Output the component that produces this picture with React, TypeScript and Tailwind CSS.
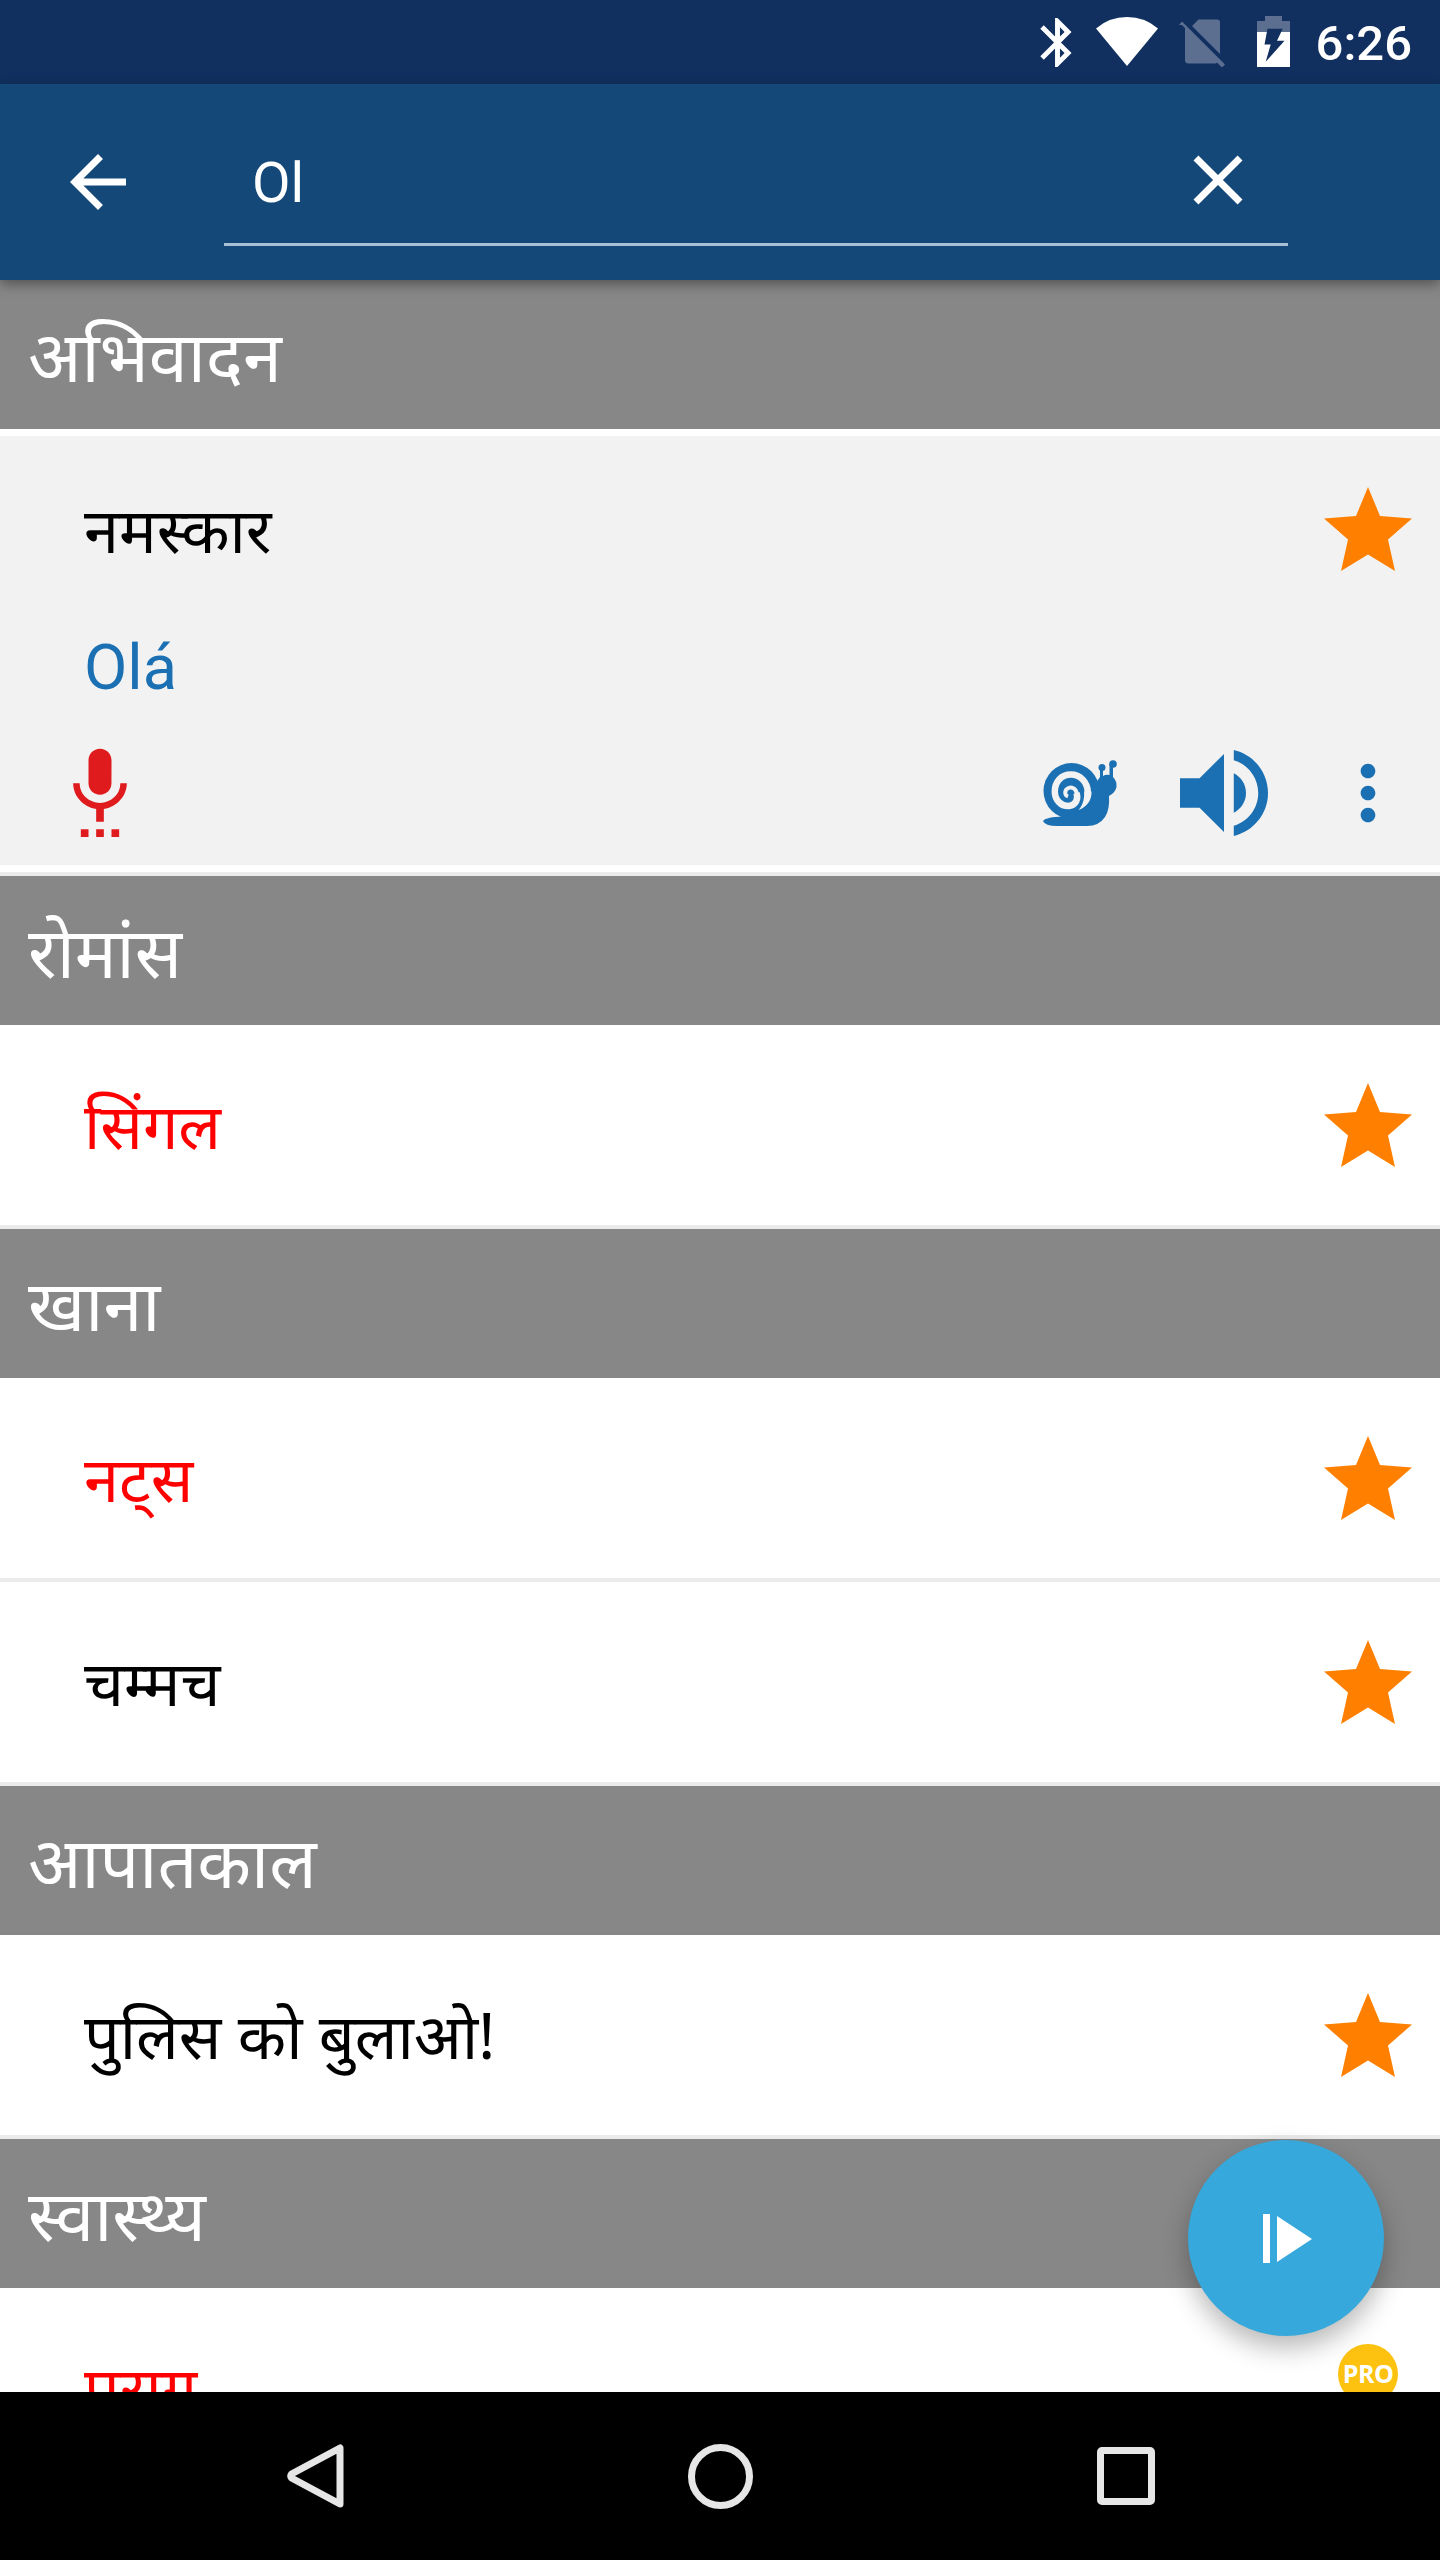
import { MdArrowBack, MdBluetooth, MdClose, MdMoreVert } from "react-icons/md";

type Phrase = {
  text: string;
  translation?: string;
  locked?: boolean;
  pro?: boolean;
};

type Section = {
  title: string;
  phrases: Phrase[];
};

const sections: Section[] = [
  { title: "अभिवादन", phrases: [{ text: "नमस्कार", translation: "Olá" }] },
  { title: "रोमांस", phrases: [{ text: "सिंगल", locked: true }] },
  {
    title: "खाना",
    phrases: [{ text: "नट्स", locked: true }, { text: "चम्मच" }],
  },
  { title: "आपातकाल", phrases: [{ text: "पुलिस को बुलाओ!" }] },
  { title: "स्वास्थ्य", phrases: [{ text: "पराग", locked: true, pro: true }] },
];

function WifiIcon() {
  return (
    <svg className="w-[62px] h-[49px]" viewBox="0 0 62 49" fill="white">
      <path d="M31 49 0 11.5Q13 0 31 0T62 11.5Z" />
    </svg>
  );
}

function NoSimIcon() {
  return (
    <svg className="w-[46px] h-[48px]" viewBox="0 0 46 48" fill="#5c6f91">
      <path d="M13 7 19.5 .5H38a3 3 0 0 1 3 3V35Z" />
      <path d="M6 9 3 6 0 6 3 2.5 46 45.5 43 48.5 38 43.5Q37.5 44.5 36 44.5H9.5a3.5 3.5 0 0 1-3.5-3.5Z" />
    </svg>
  );
}

function BatteryIcon() {
  return (
    <svg className="w-[33px] h-[51px]" viewBox="0 0 33 51">
      <path d="M8 0H25V5H33V16H0V5H8Z" fill="#5c6f91" />
      <path d="M0 16H33V51H0Z" fill="white" />
      <path d="M10.5 12.7H25.7L20 24.7H27.5L8.7 45.7 13.7 28.5H7.5Z" fill="#11305f" />
    </svg>
  );
}

function StarIcon() {
  return (
    <svg className="w-[88px] h-[84px]" viewBox="0 0 88 84" fill="#ff8000">
      <path d="M44 0 56 29 88 31.5 64 52.5 71 84 44 67.5 17 84 24 52.5 0 31.5 32 29Z" />
    </svg>
  );
}

function MicIcon() {
  return (
    <svg className="w-[92px] h-[92px]" viewBox="0 0 24 24" fill="#e01b1d">
      <path d="M7 24h2v-2H7v2zm5-11c1.66 0 2.99-1.34 2.99-3L15 4c0-1.66-1.34-3-3-3S9 2.34 9 4v6c0 1.66 1.34 3 3 3zm-1 11h2v-2h-2v2zm4 0h2v-2h-2v2zm4-14h-1.7c0 3-2.54 5.1-5.3 5.1S6.7 13 6.7 10H5c0 3.41 2.72 6.23 6 6.72V20h2v-3.28c3.28-.49 6-3.31 6-6.72z" />
    </svg>
  );
}

function SnailIcon() {
  return (
    <svg className="w-[74px] h-[66px]" viewBox="0 0 74 66" fill="none">
      <g fill="#1b70b3">
        <path d="M0 61C2 58 10 57 19 56.5L50 33Q53 22 57 17V8H60V16Q63 14 66.5 15V4H70V17Q74 21 73.5 27 72 33 66 36 67 49 62 57 56 66 44 66H14Q2 66 0 61Z" />
        <circle cx="28.5" cy="31" r="28" />
        <circle cx="59" cy="7.5" r="3.5" />
        <circle cx="70" cy="4" r="3.8" />
      </g>
      <path
        d="M35.5 50C41 44 41.5 36 41 31.5L48.5 31.5C49 40 44 47 35.5 50Z"
        fill="#f2f2f2"
      />
      <path
        d="M44.8 32C44.5 22 37 14.5 28 14.5 18 14.5 11.8 22 11.8 31.5 11.8 40 18 46.5 26 46 33 45 35.5 39 33.5 33"
        stroke="#f2f2f2"
        strokeWidth="6.5"
      />
      <path
        d="M34 36C34 29 29.5 26.5 25.5 28 21.5 29.5 21 35 25 36.5"
        stroke="#f2f2f2"
        strokeWidth="4"
      />
    </svg>
  );
}

function SpeakerIcon() {
  return (
    <svg className="w-[88px] h-[86px]" viewBox="3 3.23 18 17.54" fill="#1b70b3">
      <path d="M3 9v6h4l5 5V4L7 9H3zm13.5 3c0-1.77-1.02-3.29-2.5-4.03v8.05c1.48-.73 2.5-2.25 2.5-4.02zM14 3.23v2.06c2.89.86 5 3.54 5 6.71s-2.11 5.85-5 6.71v2.06c4.01-.91 7-4.49 7-8.77s-2.99-7.86-7-8.77z" />
    </svg>
  );
}

function StatusBar() {
  return (
    <div className="flex h-[84px] shrink-0 items-start justify-end bg-[#11305f] pr-[28px]">
      <MdBluetooth className="mt-[13px] mr-[9px] size-[59px] text-white" />
      <div className="mt-[17px] mr-[21px]">
        <WifiIcon />
      </div>
      <div className="mt-[19px] mr-[32px]">
        <NoSimIcon />
      </div>
      <div className="mt-[16px] mr-[26px]">
        <BatteryIcon />
      </div>
      <span className="pt-[2px] text-[49px] leading-[84px] font-medium text-white">6:26</span>
    </div>
  );
}

function SearchBar() {
  return (
    <header className="relative z-10 flex h-[196px] shrink-0 bg-[#134878] pl-[56px] shadow-[0_4px_12px_rgba(0,0,0,0.4)]">
      <MdArrowBack className="mt-[56px] size-[84px] text-white" />
      <div className="ml-[84px] flex h-[162px] w-[1064px] items-start justify-between border-b-[3px] border-[#a9bfd5] pr-[28px] pl-[28px]">
        <span className="mt-[59px] text-[56px] leading-[80px] text-white">Ol</span>
        <MdClose className="mt-[54px] size-[84px] text-white" />
      </div>
    </header>
  );
}

function OpenPhrase({ phrase }: { phrase: Phrase }) {
  return (
    <div className="border-b-4 border-[#ebebeb] bg-white py-[7px]">
      <div className="h-[429px] bg-[#f2f2f2]">
        <div className="flex h-[186px] items-center justify-between pr-[28px] pl-[84px]">
          <span className="font-['Noto_Sans',sans-serif] text-[63px] text-black">{phrase.text}</span>
          <StarIcon />
        </div>
        <div className="flex h-[90px] items-center pt-[2px] pl-[84px] text-[63px] text-[#1b70b3]">
          {phrase.translation}
        </div>
        <div className="flex h-[162px] items-center pr-[28px] pl-[54px]">
          <div className="mb-[4px]">
            <MicIcon />
          </div>
          <div className="ml-auto flex items-center">
            <SnailIcon />
            <div className="mr-[56px] ml-[63px]">
              <SpeakerIcon />
            </div>
            <MdMoreVert className="size-[88px] text-[#1b70b3]" />
          </div>
        </div>
      </div>
    </div>
  );
}

function PhraseRow({ phrase }: { phrase: Phrase }) {
  return (
    <div className="flex h-[204px] shrink-0 items-center justify-between border-b-4 border-[#ebebeb] bg-white pr-[28px] pl-[84px]">
      <span
        className={
          phrase.locked
            ? "font-['Noto_Sans',sans-serif] text-[63px] text-[#ff0000]"
            : "font-['Noto_Sans',sans-serif] text-[63px] text-black"
        }
      >
        {phrase.text}
      </span>
      {phrase.pro ? (
        <div className="mr-[14px] mb-[28px] flex size-[60px] items-center justify-center rounded-full bg-[#fdc210] font-['Open_Sans',sans-serif] text-[25px] font-bold tracking-[-0.5px] text-white">
          PRO
        </div>
      ) : (
        <StarIcon />
      )}
    </div>
  );
}

function NavBar() {
  return (
    <nav className="relative z-10 flex h-[168px] shrink-0 items-center bg-black pl-[287px]">
      <svg className="h-[66px] w-[58px]" viewBox="0 0 58 66" fill="none" stroke="#e6e6e6" strokeWidth="7" strokeLinejoin="round">
        <path d="M53 5V61L4.5 35Q3 33 4.5 31Z" />
      </svg>
      <div className="ml-[343px] size-[65px] rounded-full border-[7px] border-[#e6e6e6]" />
      <div className="ml-[344px] size-[58px] rounded-[5px] border-[7px] border-[#e6e6e6]" />
    </nav>
  );
}

export default function App() {
  return (
    <div className="relative flex h-[2560px] w-[1440px] flex-col overflow-hidden bg-white font-[Roboto,sans-serif]">
      <StatusBar />
      <SearchBar />
      <main className="h-[2112px] shrink-0 overflow-hidden">
        {sections.map((section) => (
          <section key={section.title}>
            <h2 className="h-[149px] bg-[#878787] pl-[28px] font-['Noto_Sans',sans-serif] text-[70px] leading-[151px] text-white">
              {section.title}
            </h2>
            {section.phrases.map((phrase) =>
              phrase.translation ? (
                <OpenPhrase key={phrase.text} phrase={phrase} />
              ) : (
                <PhraseRow key={phrase.text} phrase={phrase} />
              )
            )}
          </section>
        ))}
      </main>
      <NavBar />

      {/* play all button floats over the list */}
      <button className="absolute top-[2140px] left-[1188px] z-20 flex size-[196px] items-center justify-center rounded-full bg-[#36a8db] pl-[3px] shadow-[0_12px_26px_rgba(0,0,0,0.28)]">
        <svg className="h-[49px] w-[49px]" viewBox="0 0 49 49" fill="white">
          <path d="M0 0H7V49H0ZM14 2 49 25 14 48Z" />
        </svg>
      </button>
    </div>
  );
}
